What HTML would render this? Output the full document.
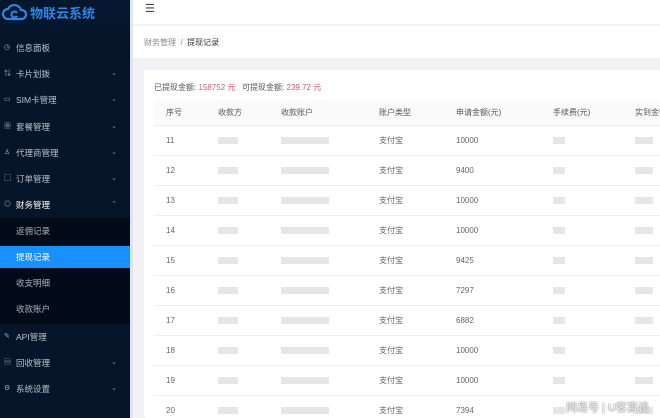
<!DOCTYPE html>
<html><head><meta charset="utf-8"><style>
*{margin:0;padding:0;box-sizing:border-box}
html,body{width:660px;height:418px;overflow:hidden}
body{font-family:"Liberation Sans","Noto Sans CJK SC",sans-serif;font-size:8px;background:#f0f2f5;position:relative}
.side{position:absolute;left:0;top:0;width:130px;height:418px;background:#061529}
.logo{height:26px;background:#04172e;color:#2f86e6;font-size:13px;font-weight:bold;padding:3px 0 0 30px;position:relative}
.logo svg{position:absolute;left:2px;top:3px}
.mi{position:absolute;left:0;width:130px;height:26px;line-height:26px;color:#b8c0cc;padding-left:16px;font-size:8.5px}
.mi i{position:absolute;left:4px;top:0;font-style:normal;font-size:7px;color:#aab}
.mi b{position:absolute;right:13px;top:0;font-weight:normal;font-size:7px;color:#889}
.sub{position:absolute;left:0;top:218px;width:130px;height:106px;background:#020b18}
.si{position:absolute;left:0;width:130px;height:22px;line-height:22px;padding-left:16px;color:#a8b0bb;font-size:8.5px}
.act{background:#1890ff;color:#fff}
.main{position:absolute;left:130px;top:0;width:530px;height:418px;border-left:3px solid #dfe4ee}
.hdr{position:absolute;left:0;top:0;width:530px;height:25px;background:#fff;border-bottom:1px solid #f0f0f0}
.bc{position:absolute;left:0;top:26px;width:530px;height:32px;background:#fff;color:#888;padding:11px 0 0 11px}
.card{position:absolute;left:11px;top:70px;width:520px;height:348px;background:#fff;border-radius:3px;overflow:hidden}
.sum{position:absolute;left:10px;top:12px;color:#555}
.sum span{color:#c0607a}
table{position:absolute;left:10px;top:30px;width:520px;border-collapse:collapse;color:#666}
th{background:#fafafa;height:25px;font-weight:normal;text-align:left;color:#555;border-bottom:1px solid #eee}
td{height:30px;border-bottom:1px solid #eee}
th,td{padding-left:12px}
.bl{display:inline-block;height:7px;background:#e6e6e6;vertical-align:middle}
.wm{position:absolute;left:566px;top:399px;color:#f4f4f4;font-size:11px;text-shadow:0 0 1px #777,0 0 2px #999}
</style></head><body>
<div class="side">
<div class="logo"><svg width="26" height="18" viewBox="0 0 26 18"><path d="M6 16a5 5 0 0 1 0-10a7 7 0 0 1 13 1a4.5 4.5 0 0 1 1 9z" fill="none" stroke="#2f86e6" stroke-width="2.2"/><path d="M15 10a3 3 0 1 0 0 3" fill="none" stroke="#2f86e6" stroke-width="2"/></svg>物联云系统</div>
<div class="mi" style="top:35px"><i>◷</i>信息面板</div>
<div class="mi" style="top:61px"><i>⇅</i>卡片划拨<b>⌄</b></div>
<div class="mi" style="top:87px"><i>▭</i>SIM卡管理<b>⌄</b></div>
<div class="mi" style="top:114px"><i>▦</i>套餐管理<b>⌄</b></div>
<div class="mi" style="top:140px"><i>♙</i>代理商管理<b>⌄</b></div>
<div class="mi" style="top:166px"><i>▢</i>订单管理<b>⌄</b></div>
<div class="mi" style="top:192px;color:#fff"><i>◎</i>财务管理<b>⌃</b></div>
<div class="sub">
<div class="si" style="top:2px">返佣记录</div>
<div class="si act" style="top:28px">提现记录</div>
<div class="si" style="top:54px">收支明细</div>
<div class="si" style="top:80px">收款账户</div>
</div>
<div class="mi" style="top:324px"><i>✎</i>API管理</div>
<div class="mi" style="top:350px"><i>▤</i>回收管理<b>⌄</b></div>
<div class="mi" style="top:376px"><i>⚙</i>系统设置<b>⌄</b></div>
</div>
<div class="main">
<div class="hdr"><span style="position:absolute;left:12px;top:2px;font-size:11px;color:#444">☰</span></div>
<div class="bc">财务管理 &nbsp;/&nbsp; <span style="color:#333">提现记录</span></div>
<div class="card">
<div class="sum">已提现金额: <span>158752 元</span> &nbsp; 可提现金额: <span>239.72 元</span></div>
<table>
<tr><th style="width:52px">序号</th><th style="width:63px">收款方</th><th style="width:98px">收款账户</th><th style="width:77px">账户类型</th><th style="width:97px">申请金额(元)</th><th style="width:82px">手续费(元)</th><th>实到金额</th></tr>
<tr><td>11</td><td><span class="bl" style="width:20px"></span></td><td><span class="bl" style="width:48px"></span></td><td>支付宝</td><td>10000</td><td><span class="bl" style="width:12px"></span></td><td><span class="bl" style="width:18px"></span></td></tr>
<tr><td>12</td><td><span class="bl" style="width:20px"></span></td><td><span class="bl" style="width:48px"></span></td><td>支付宝</td><td>9400</td><td><span class="bl" style="width:12px"></span></td><td><span class="bl" style="width:18px"></span></td></tr>
<tr><td>13</td><td><span class="bl" style="width:20px"></span></td><td><span class="bl" style="width:48px"></span></td><td>支付宝</td><td>10000</td><td><span class="bl" style="width:12px"></span></td><td><span class="bl" style="width:18px"></span></td></tr>
<tr><td>14</td><td><span class="bl" style="width:20px"></span></td><td><span class="bl" style="width:48px"></span></td><td>支付宝</td><td>10000</td><td><span class="bl" style="width:12px"></span></td><td><span class="bl" style="width:18px"></span></td></tr>
<tr><td>15</td><td><span class="bl" style="width:20px"></span></td><td><span class="bl" style="width:48px"></span></td><td>支付宝</td><td>9425</td><td><span class="bl" style="width:12px"></span></td><td><span class="bl" style="width:18px"></span></td></tr>
<tr><td>16</td><td><span class="bl" style="width:20px"></span></td><td><span class="bl" style="width:48px"></span></td><td>支付宝</td><td>7297</td><td><span class="bl" style="width:12px"></span></td><td><span class="bl" style="width:18px"></span></td></tr>
<tr><td>17</td><td><span class="bl" style="width:20px"></span></td><td><span class="bl" style="width:48px"></span></td><td>支付宝</td><td>6882</td><td><span class="bl" style="width:12px"></span></td><td><span class="bl" style="width:18px"></span></td></tr>
<tr><td>18</td><td><span class="bl" style="width:20px"></span></td><td><span class="bl" style="width:48px"></span></td><td>支付宝</td><td>10000</td><td><span class="bl" style="width:12px"></span></td><td><span class="bl" style="width:18px"></span></td></tr>
<tr><td>19</td><td><span class="bl" style="width:20px"></span></td><td><span class="bl" style="width:48px"></span></td><td>支付宝</td><td>10000</td><td><span class="bl" style="width:12px"></span></td><td><span class="bl" style="width:18px"></span></td></tr>
<tr><td>20</td><td><span class="bl" style="width:20px"></span></td><td><span class="bl" style="width:48px"></span></td><td>支付宝</td><td>7394</td><td><span class="bl" style="width:12px"></span></td><td><span class="bl" style="width:18px"></span></td></tr>
</table>
</div>
</div>
<div class="wm">网易号 | U客直谈</div>
</body></html>
